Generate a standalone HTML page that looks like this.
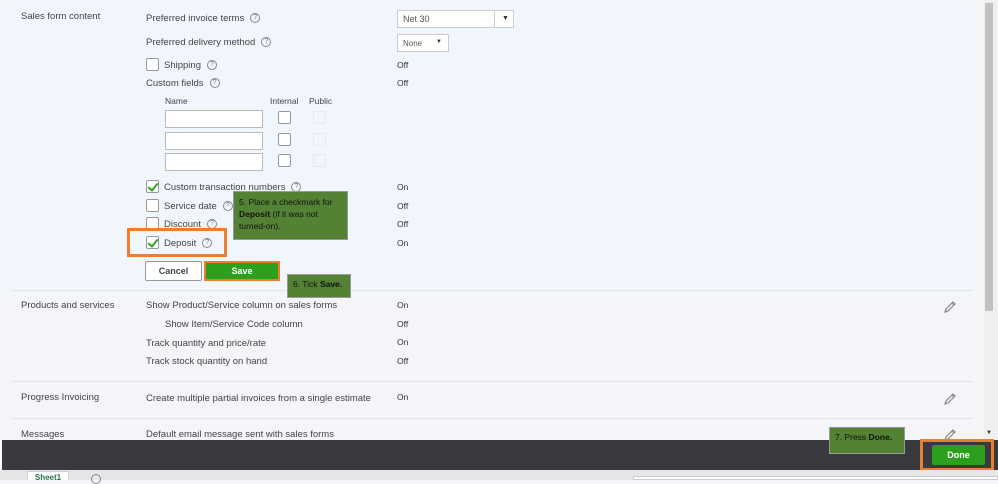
<!DOCTYPE html>
<html><head><meta charset="utf-8"><style>
*{margin:0;padding:0;box-sizing:border-box}
body{width:998px;height:480px;overflow:hidden;position:relative;background:#f4f5f8;font-family:"Liberation Sans",sans-serif;font-size:9px;color:#555}
.a{position:absolute;white-space:nowrap}
.top{position:absolute;left:2px;top:3px;width:971px;height:287px;background:#f1f6fd}
.l{color:#444;font-size:9.5px}
.v{color:#333;font-size:8.5px}
.q{display:inline-block;width:10px;height:10px;border:1px solid #888;border-radius:50%;font-size:7px;line-height:8px;text-align:center;color:#777;margin-left:6px;vertical-align:middle}
.cb{position:absolute;width:13px;height:13px;border:1px solid #999;background:#fff;border-radius:2px}
.cb.on::after{content:"";position:absolute;left:3px;top:0px;width:4px;height:8px;border:solid #2ca01c;border-width:0 2px 2px 0;transform:rotate(40deg)}
.inp{position:absolute;left:165px;width:98px;height:18px;border:1px solid #bbb;background:#fff}
.sep{position:absolute;left:12px;width:961px;height:1px;background:#e3e5ea}
.note{position:absolute;z-index:5;background:#548235;border:1px solid #999;color:#111;font-size:8.5px;line-height:12px;padding:4px 5px;white-space:normal}
.pen{position:absolute;width:14px;height:14px}
</style></head><body>
<div class="top"></div>
<div class="a l" style="left:21px;top:11px">Sales form content</div>
<div class="a l" style="left:146px;top:13px">Preferred invoice terms<span class="q">?</span></div>
<div class="a" style="left:397px;top:10px;width:117px;height:18px;border:1px solid #ccc;background:#fff"><span style="position:absolute;left:5px;top:3px;color:#555">Net 30</span><span style="position:absolute;left:96px;top:0;width:1px;height:16px;background:#ccc"></span><span style="position:absolute;left:104px;top:4px;font-size:7px;color:#333">▼</span></div>
<div class="a l" style="left:146px;top:37px">Preferred delivery method<span class="q">?</span></div>
<div class="a" style="left:397px;top:34px;width:52px;height:18px;border:1px solid #ccc;background:#fff"><span style="position:absolute;left:5px;top:4px;color:#555;font-size:8px">None</span><span style="position:absolute;left:38px;top:4px;font-size:6px;color:#333">▼</span></div>
<div class="cb" style="left:146px;top:58px"></div>
<div class="a l" style="left:164px;top:60px">Shipping<span class="q">?</span></div>
<div class="a v" style="left:397px;top:60px">Off</div>
<div class="a l" style="left:146px;top:78px">Custom fields<span class="q">?</span></div>
<div class="a v" style="left:397px;top:78px">Off</div>
<div class="a l" style="left:165px;top:96px;font-size:8.5px">Name</div>
<div class="a l" style="left:270px;top:96px;font-size:8.5px">Internal</div>
<div class="a l" style="left:309px;top:96px;font-size:8.5px">Public</div>
<div class="inp" style="top:110px"></div><div class="inp" style="top:132px"></div><div class="inp" style="top:153px"></div>
<div class="cb" style="left:278px;top:111px"></div><div class="cb" style="left:278px;top:133px"></div><div class="cb" style="left:278px;top:154px"></div>
<div class="cb" style="left:313px;top:111px;border-color:#e6e9ee;background:#f1f6fd"></div><div class="cb" style="left:313px;top:133px;border-color:#e6e9ee;background:#f1f6fd"></div><div class="cb" style="left:313px;top:154px;border-color:#e6e9ee;background:#f1f6fd"></div>
<div class="cb on" style="left:146px;top:180px"></div>
<div class="a l" style="left:164px;top:182px">Custom transaction numbers<span class="q">?</span></div>
<div class="a v" style="left:397px;top:182px">On</div>
<div class="cb" style="left:146px;top:199px"></div>
<div class="a l" style="left:164px;top:201px">Service date<span class="q">?</span></div>
<div class="a v" style="left:397px;top:201px">Off</div>
<div class="cb" style="left:146px;top:217px"></div>
<div class="a l" style="left:164px;top:219px">Discount<span class="q">?</span></div>
<div class="a v" style="left:397px;top:219px">Off</div>
<div class="cb on" style="left:146px;top:236px"></div>
<div class="a l" style="left:164px;top:238px">Deposit<span class="q">?</span></div>
<div class="a v" style="left:397px;top:238px">On</div>
<div class="a" style="left:127px;top:228px;width:100px;height:29px;border:3px solid #ed7d31"></div>
<div class="note" style="left:233px;top:191px;width:115px;height:49px">5. Place a checkmark for <b>Deposit</b> (if it was not turned-on).</div>
<div class="a" style="left:145px;top:261px;width:57px;height:20px;border:1px solid #999;background:#fff;border-radius:2px;text-align:center;line-height:18px;font-weight:bold;color:#444;font-size:9px">Cancel</div>
<div class="a" style="left:204px;top:261px;width:76px;height:20px;background:#2ca01c;border:2px solid #ed7d31;text-align:center;line-height:16px;font-weight:bold;color:#fff;font-size:9px">Save</div>
<div class="sep" style="top:290px"></div>
<div class="note" style="left:287px;top:274px;width:64px;height:24px;padding:3px 5px;white-space:nowrap">6. Tick <b>Save.</b></div>
<div class="a l" style="left:21px;top:300px">Products and services</div>
<div class="a l" style="left:146px;top:300px">Show Product/Service column on sales forms</div>
<div class="a v" style="left:397px;top:300px">On</div>
<div class="a l" style="left:165px;top:319px">Show Item/Service Code column</div>
<div class="a v" style="left:397px;top:319px">Off</div>
<div class="a l" style="left:146px;top:338px">Track quantity and price/rate</div>
<div class="a v" style="left:397px;top:337px">On</div>
<div class="a l" style="left:146px;top:356px">Track stock quantity on hand</div>
<div class="a v" style="left:397px;top:356px">Off</div>
<div class="sep" style="top:381px"></div>
<div class="a l" style="left:21px;top:392px">Progress Invoicing</div>
<div class="a l" style="left:146px;top:393px">Create multiple partial invoices from a single estimate</div>
<div class="a v" style="left:397px;top:392px">On</div>
<div class="sep" style="top:418px"></div>
<div class="a l" style="left:21px;top:429px">Messages</div>
<div class="a l" style="left:146px;top:429px">Default email message sent with sales forms</div>
<svg class="pen" style="left:943px;top:300px" viewBox="0 0 14 14"><path d="M2 12 L3 9 L10 2 L12 4 L5 11 Z M9 3 L11 5" fill="none" stroke="#888" stroke-width="1.2"/></svg>
<svg class="pen" style="left:943px;top:392px" viewBox="0 0 14 14"><path d="M2 12 L3 9 L10 2 L12 4 L5 11 Z M9 3 L11 5" fill="none" stroke="#888" stroke-width="1.2"/></svg>
<svg class="pen" style="left:943px;top:428px" viewBox="0 0 14 14"><path d="M2 12 L3 9 L10 2 L12 4 L5 11 Z M9 3 L11 5" fill="none" stroke="#888" stroke-width="1.2"/></svg>
<div class="a" style="left:984px;top:0;width:14px;height:440px;background:#f0f0f0"></div>
<div class="a" style="left:985px;top:3px;width:8px;height:308px;background:#c1c1c1"></div>
<div class="a" style="left:986px;top:430px;font-size:6px;color:#333">▼</div>
<div class="a" style="left:2px;top:440px;width:996px;height:30px;background:#393a3d"></div>
<div class="a" style="left:0;top:440px;width:2px;height:40px;background:#fff"></div>
<div class="note" style="left:829px;top:427px;width:76px;height:27px;padding:3px 5px;white-space:nowrap">7. Press <b>Done.</b></div>
<div class="a" style="left:920px;top:439px;width:74px;height:32px;border:3px solid #ed7d31;background:#393a3d"></div>
<div class="a" style="left:932px;top:445px;width:53px;height:20px;background:#2ca01c;border-radius:2px;color:#fff;font-weight:bold;text-align:center;line-height:20px;font-size:9px">Done</div>
<div class="a" style="left:0;top:470px;width:998px;height:10px;background:#e6e6e6"></div>
<div class="a" style="left:27px;top:471px;width:42px;height:9px;background:#fff;border:1px solid #ccc;border-bottom:none;font-size:8px;color:#217346;text-align:center;line-height:12px;font-weight:bold;overflow:hidden">Sheet1</div>
<div class="a" style="left:91px;top:474px;width:10px;height:10px;border:1px solid #888;border-radius:50%"></div>
<div class="a" style="left:633px;top:476px;width:365px;height:4px;background:#fff;border:1px solid #ccc"></div>
</body></html>
